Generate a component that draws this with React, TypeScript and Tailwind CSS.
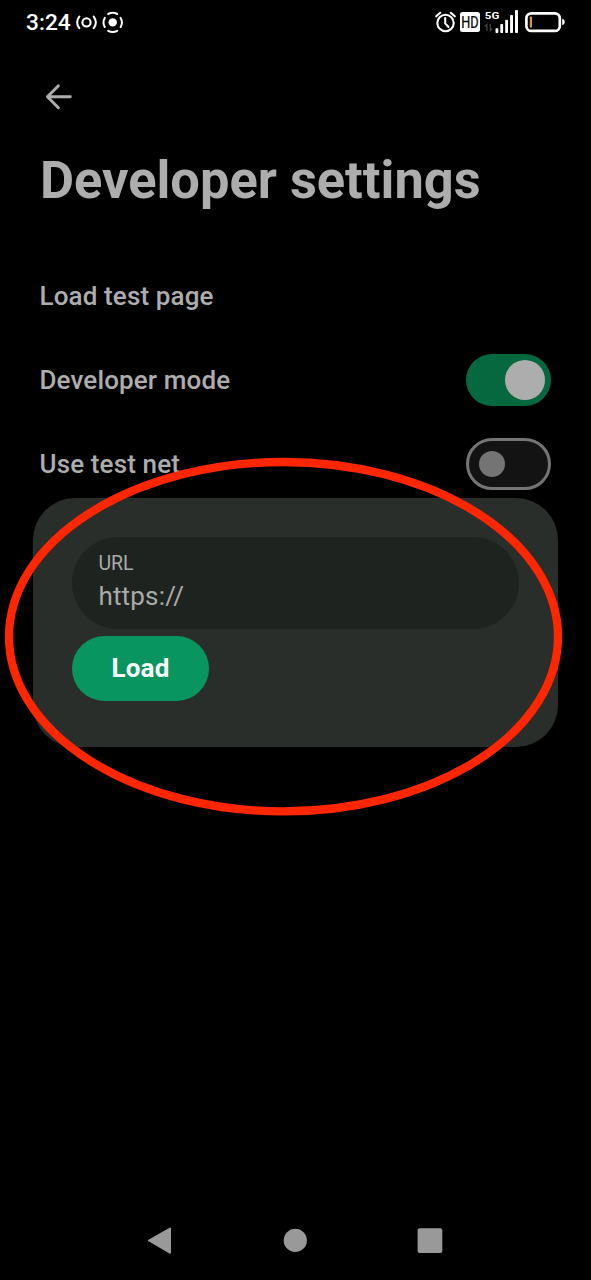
import React from "react";

function StatusBar() {
  return (
    <header className="flex h-11 items-center justify-between pl-[26px] pr-[25px] text-white">
      <div className="flex items-center">
        <span className="w-[49px] pt-[2px] text-[22.7px] font-medium leading-6">3:24</span>
        <svg className="h-11 w-[51px]" viewBox="75 0 51 44" fill="none" stroke="currentColor" strokeLinecap="round">
          <circle cx="86.5" cy="22.4" r="4.1" strokeWidth="2.1" />
          <path d="M79.3 16.6Q75 22.4 79.3 28.2M93.7 16.6Q98 22.4 93.7 28.2" strokeWidth="2" />
          <circle cx="112.7" cy="22.4" r="4.2" fill="currentColor" stroke="none" />
          <path d="M108.2 14Q112.7 11.7 117.2 14M108.2 30.8Q112.7 33.1 117.2 30.8M104.8 17.9Q102.2 22.4 104.8 26.9M120.6 17.9Q123.2 22.4 120.6 26.9" strokeWidth="2" />
        </svg>
      </div>
      <div className="flex items-center">
        <svg className="h-11 w-[23px]" viewBox="434 0 23 44" fill="none" stroke="currentColor" strokeWidth="2.1" strokeLinecap="round">
          <circle cx="445.5" cy="23" r="8.2" />
          <path d="M445.2 18V23.4L448.5 27" />
          <path d="M436.2 16.3L440.2 12.8M450.8 12.8L454.8 16.3" />
        </svg>
        <svg className="ml-px h-11 w-6" viewBox="458 0 24 44">
          <rect x="460" y="12" width="20" height="20" rx="2.5" fill="white" />
          <text x="461.3" y="27.7" textLength="17.4" lengthAdjust="spacingAndGlyphs" fontSize="16" fontWeight="400" fill="black" stroke="black" strokeWidth=".2">HD</text>
        </svg>
        <svg className="ml-[2px] h-11 w-[35px]" viewBox="484 0 35 44" fill="currentColor">
          <text x="484.8" y="18.6" fontSize="9.8" fontWeight="700" textLength="14.5" lengthAdjust="spacingAndGlyphs">5G</text>
          <path d="M486.9 31V24.5L484.8 26.5M490.3 24V30.5L492 28.5" fill="none" stroke="#444" strokeWidth="1.3" />
          <rect x="495.5" y="28.3" width="2.8" height="4.7" rx=".7" />
          <rect x="500.3" y="24" width="2.8" height="9" rx=".7" />
          <rect x="505.2" y="19.7" width="2.8" height="13.3" rx=".7" />
          <rect x="510.1" y="15" width="2.9" height="18" rx=".7" />
          <rect x="515" y="10" width="3" height="23" rx=".7" />
        </svg>
        <svg className="ml-[6px] h-11 w-[41px]" viewBox="525 0 41 44" fill="none">
          <rect x="526.4" y="13.3" width="33.4" height="17.6" rx="5" stroke="white" strokeWidth="2.7" />
          <rect x="529.8" y="16.5" width="2.2" height="11" rx=".8" fill="#d89450" />
          <path d="M562.2 18.7Q564.8 19.3 564.8 22T562.2 25.3Z" fill="white" />
        </svg>
      </div>
    </header>
  );
}

function Toggle({ on }: { on: boolean }) {
  return on ? (
    <button role="switch" aria-checked="true" className="flex h-[52px] w-[85px] items-center justify-end rounded-full bg-[#06683f] pr-[6px]">
      <span className="h-10 w-10 rounded-full bg-[#adadad]" />
    </button>
  ) : (
    <button role="switch" aria-checked="false" className="flex h-[52px] w-[85px] items-center rounded-full border-3 border-[#737473] bg-[#131313] pl-[10px]">
      <span className="h-[26.4px] w-[26.4px] rounded-full bg-[#737473]" />
    </button>
  );
}

function Row({ label, children }: { label: string; children?: React.ReactNode }) {
  return (
    <div className="flex h-[84px] items-center justify-between">
      <span className="-ml-[0.5px] text-[26px] font-medium leading-8 tracking-[0.13px]">{label}</span>
      {children}
    </div>
  );
}

function LoadSheet() {
  return (
    <section className="absolute left-[33px] top-[498px] flex h-[249px] w-[525px] flex-col items-start rounded-[42px] bg-[#292e2b] px-[39px] pt-[39px]">
      <label className="flex h-[92px] w-full flex-col rounded-full bg-[#1f2320] pl-[26.4px] pt-[15px] text-[#a9aba9]">
        <span className="text-[19.5px] leading-6">URL</span>
        <span className="mt-1 text-[26px] leading-8 tracking-[0.2px]">https://</span>
      </label>
      <button className="mt-[7px] h-[65px] w-[137px] rounded-full bg-[#08955f] pb-[2px] text-[26px] font-bold leading-8 tracking-[0.2px] text-white">
        Load
      </button>
    </section>
  );
}

export default function App() {
  return (
    <div className="relative flex h-[1280px] w-[591px] flex-col overflow-hidden bg-black font-[Roboto,sans-serif] text-[#adadad]">
      <StatusBar />
      <main className="flex-1 px-10">
        <button aria-label="Back" className="mt-[37px] flex h-8 items-center pl-[5px]">
          <svg className="h-8 w-7" viewBox="45 81 28 32" fill="none" stroke="currentColor" strokeWidth="2.9" strokeLinecap="round" strokeLinejoin="round">
            <path d="M70.3 96.8H47.4M58.4 85.8L47.4 96.8L58.4 107.8" />
          </svg>
        </button>
        <h1 className="mt-[37px] whitespace-nowrap text-[52.4px] font-bold leading-[60px]">Developer settings</h1>
        <div className="mt-[44px]">
          <Row label="Load test page" />
          <Row label="Developer mode">
            <Toggle on />
          </Row>
          <Row label="Use test net">
            <Toggle on={false} />
          </Row>
        </div>
      </main>
      <nav className="flex h-20 items-center justify-between pl-[146px] pr-[147px] text-[#999]">
        <svg className="h-8 w-7" viewBox="146 1224 28 32" fill="currentColor" stroke="currentColor" strokeWidth="2" strokeLinejoin="round">
          <path d="M149 1240.5L170 1228.5V1252.7Z" />
        </svg>
        <svg className="h-8 w-7" viewBox="281 1224 28 32" fill="currentColor">
          <circle cx="295.3" cy="1240.4" r="11.6" />
        </svg>
        <svg className="h-8 w-7" viewBox="416 1224 28 32" fill="currentColor">
          <rect x="417.6" y="1228.2" width="24.7" height="24.7" rx="2" />
        </svg>
      </nav>
      <LoadSheet />
      <svg className="pointer-events-none absolute inset-0 h-full w-full" viewBox="0 0 591 1280" fill="none">
        <ellipse cx="283.5" cy="636.7" rx="274.5" ry="174.7" stroke="#ff2600" strokeWidth="8.3" />
      </svg>
    </div>
  );
}
